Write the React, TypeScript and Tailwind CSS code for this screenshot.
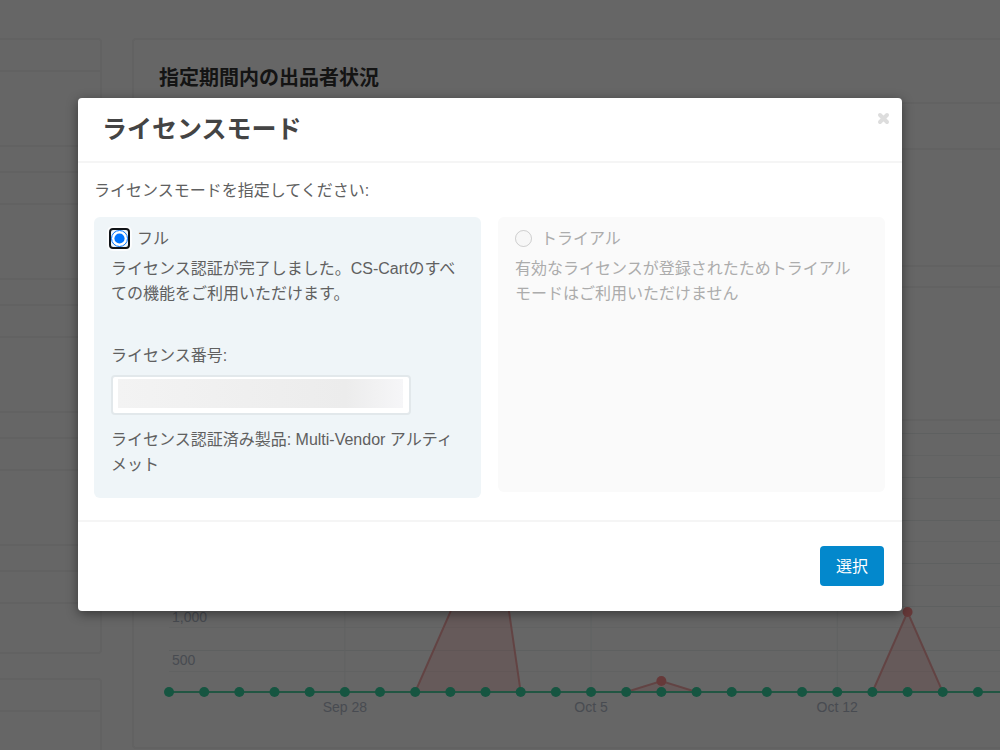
import { useState } from 'react';

const STEP = 35.17;
const DAYS = 25;
const sideCards = [109, 109, 109, 109, 84, 109];
const gridLines = [13, 35, 57, 78, 100, 121, 143, 165, 186, 207, 230, 251];

const dayX = (index: number) => 35 + index * STEP;

function SalesChart() {
  return (
    <svg width="2000" height="326" className="block shrink-0" fontFamily="Liberation Sans, Arial, sans-serif" fontSize="14">
      {gridLines.map((y, i) => (
        <line key={y} x1="35" x2="2000" y1={y - 0.5} y2={y - 0.5} stroke={i % 2 ? '#f2f4f4' : '#ebefef'} />
      ))}
      {[5, 12, 19].map((day) => (
        <line key={day} x1={dayX(day)} x2={dayX(day)} y1="0" y2="271" stroke="#eff3f3" />
      ))}
      <g fill="#b4bccb">
        <text x="38" y="201">1,000</text>
        <text x="38" y="244">500</text>
        <text x={dayX(5)} y="291" textAnchor="middle">Sep 28</text>
        <text x={dayX(12)} y="291" textAnchor="middle">Oct 5</text>
        <text x={dayX(19)} y="291" textAnchor="middle">Oct 12</text>
      </g>
      <g fill="#ff9c9c" fillOpacity="0.3" stroke="#f49c9c" strokeWidth="2" strokeOpacity="0.85">
        <polygon points={`${dayX(7)},271 ${dayX(8)},191 ${dayX(9)},28 ${dayX(10)},271`} />
        <polygon points={`${dayX(13)},271 ${dayX(14)},260 ${dayX(15)},271`} />
        <polygon points={`${dayX(20)},271 ${dayX(21)},191 ${dayX(22)},271`} />
      </g>
      <circle cx={dayX(14)} cy="260" r="5" fill="#ff8f8f" />
      <circle cx={dayX(21)} cy="191" r="5" fill="#ff8f8f" />
      <line x1="35" x2="2000" y1="271" y2="271" stroke="#55d6a8" strokeWidth="2" />
      {Array.from({ length: DAYS }, (_, i) => (
        <circle key={i} cx={dayX(i)} cy="271" r="5" fill="#38d4a2" />
      ))}
    </svg>
  );
}

function Dashboard() {
  return (
    <div className="flex h-screen gap-[30px] overflow-hidden bg-white pt-[38px]" aria-hidden="true">
      <div className="flex w-[102px] shrink-0 flex-col gap-6">
        {sideCards.map((height, i) => (
          <div key={i} className="shrink-0 rounded-r border-2 border-l-0 border-[#f4f4f4]" style={{ height }}>
            <div className="h-8 border-b-2 border-[#f4f4f4]" />
          </div>
        ))}
      </div>
      <section className="flex h-[711px] min-w-0 flex-1 flex-col overflow-hidden rounded-l border-2 border-r-0 border-[#f4f4f4]">
        <h2 className="h-16 shrink-0 border-b-2 border-[#f4f4f4] px-[25px] pt-[23px] text-xl leading-[30px] font-bold text-[#333]">
          指定期間内の出品者状況
        </h2>
        <div className="h-[46px] shrink-0 border-b-2 border-[#f4f4f4]" />
        <div className="h-[117px] shrink-0 border-b-2 border-[#f4f4f4]" />
        <div className="h-[21px] shrink-0 border-b-2 border-[#f4f4f4]" />
        <div className="h-[133px] shrink-0 border-b-2 border-[#f4f4f4]" />
        <SalesChart />
      </section>
    </div>
  );
}

export default function App() {
  const [mode, setMode] = useState('full');
  const [open, setOpen] = useState(true);

  return (
    <div className="relative min-h-screen font-['Liberation_Sans','Noto_Sans_CJK_JP',sans-serif] text-base leading-[25px] text-[#606060]">
      <Dashboard />
      {open && (
        <div className="absolute inset-0 bg-black/60 pt-[98px] pr-[98px] pl-[78px]">
          <div
            role="dialog"
            aria-labelledby="license-title"
            className="rounded bg-white shadow-[0_3px_12px_rgba(0,0,0,0.45)]"
          >
            <div className="flex h-[65px] items-start justify-between border-b-2 border-[#f5f5f5] pr-3 pl-6">
              <h3 id="license-title" className="pt-[13px] text-[25px] leading-9 font-bold text-[#444]">
                ライセンスモード
              </h3>
              <button type="button" aria-label="閉じる" onClick={() => setOpen(false)} className="mt-[14px]">
                <svg width="13" height="13" viewBox="0 0 13 13" stroke="#ddd" strokeWidth="4" strokeLinecap="round">
                  <path d="M3 3l7 7M10 3l-7 7" />
                </svg>
              </button>
            </div>

            <div className="pt-[15px] pr-[17px] pb-[22px] pl-4">
              <p>ライセンスモードを指定してください:</p>
              <div className="mt-[14px] grid grid-cols-2 items-start gap-[17px]">
                <div className="h-[281px] rounded-md bg-[#eff5f8] px-[17px] pt-[9px]">
                  <label className="-ml-0.5 flex items-center gap-[7px]">
                    <span className="flex size-[21px] items-center justify-center rounded border-2 border-[#101418] bg-[#eff5f8] ring-2 ring-white/80">
                      <input
                        type="radio"
                        name="mode"
                        value="full"
                        checked={mode === 'full'}
                        onChange={() => setMode('full')}
                        className="size-[17px] shrink-0"
                      />
                    </span>
                    フル
                  </label>
                  <p className="mt-[5px]">ライセンス認証が完了しました。CS-Cartのすべての機能をご利用いただけます。</p>
                  <label htmlFor="license-number" className="mt-[37px] block">ライセンス番号:</label>
                  <div className="relative mt-[7px] w-[300px] max-w-full">
                    <input
                      id="license-number"
                      type="text"
                      readOnly
                      className="block h-10 w-full rounded border-2 border-[#e2e8eb] bg-white px-2"
                    />
                    <span className="absolute top-1 right-2 bottom-[7px] left-[7px] bg-linear-to-r from-[#f3f3f3] via-[#ececec] via-80% to-[#f6f6f8]" />
                  </div>
                  <p className="mt-3">ライセンス認証済み製品: Multi-Vendor アルティメット</p>
                </div>

                <div className="h-[275px] rounded-md bg-[#fafafa] pt-[9px] pr-[27px] pl-[17px] text-[#acacac]">
                  <label className="flex items-center gap-[9px]">
                    <input
                      type="radio"
                      name="mode"
                      value="trial"
                      disabled
                      checked={mode === 'trial'}
                      onChange={() => setMode('trial')}
                      className="size-[17px] bg-[#f2f2f2]"
                    />
                    トライアル
                  </label>
                  <p className="mt-[5px]">有効なライセンスが登録されたためトライアルモードはご利用いただけません</p>
                </div>
              </div>
            </div>

            <div className="flex justify-end border-t-2 border-[#f5f5f5] px-[18px] pt-6 pb-[25px]">
              <button type="button" onClick={() => setOpen(false)} className="h-10 rounded bg-[#0388cc] px-4 text-white">
                選択
              </button>
            </div>
          </div>
        </div>
      )}
    </div>
  );
}
